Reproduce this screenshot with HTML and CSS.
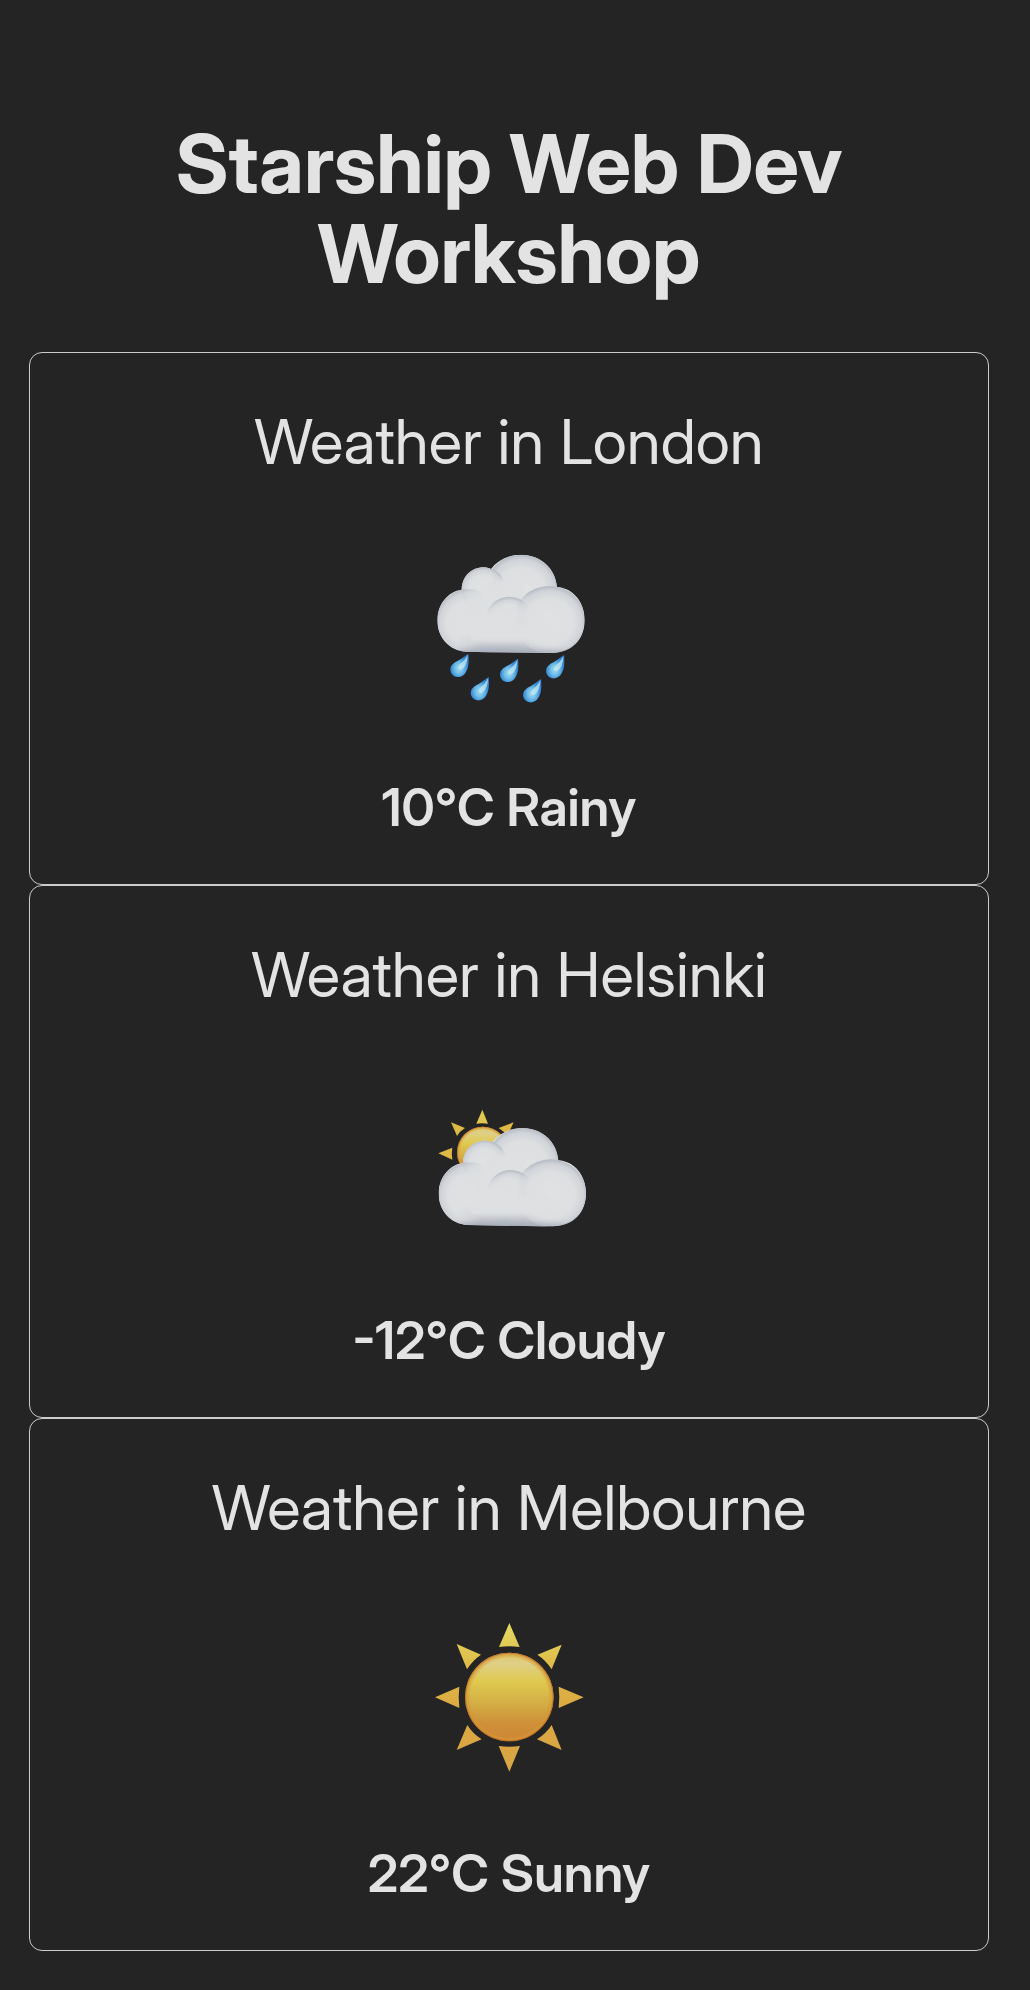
FILE: index.html
```html
<!DOCTYPE html>
<html lang="en">
<head>
<meta charset="utf-8">
<meta name="viewport" content="width=device-width, initial-scale=1">
<title>Starship Web Dev Workshop</title>
<link rel="stylesheet" href="styles.css">
</head>
<body>
<svg class="defs" aria-hidden="true">
  <defs>
    <linearGradient id="cloudBase" x1="0" y1="0" x2="0" y2="1">
      <stop offset="0" stop-color="#dcdee0"/>
      <stop offset=".78" stop-color="#dddfe1"/>
      <stop offset=".92" stop-color="#bfc4cb"/>
      <stop offset="1" stop-color="#abb1bb"/>
    </linearGradient>
    <radialGradient id="lobe" cx=".5" cy=".53" r=".53">
      <stop offset="0" stop-color="#e1e2e3"/>
      <stop offset=".65" stop-color="#dddfe1"/>
      <stop offset=".87" stop-color="#d0d3d8"/>
      <stop offset="1" stop-color="#b4bac3"/>
    </radialGradient>
    <linearGradient id="fade" x1="0" y1="0" x2="0" y2="1">
      <stop offset=".1" stop-color="#fff"/>
      <stop offset=".4" stop-color="#000"/>
    </linearGradient>
    <linearGradient id="fadeDiagonal" gradientUnits="userSpaceOnUse" x1="150" y1="100" x2="190" y2="165">
      <stop offset=".65" stop-color="#fff"/>
      <stop offset="1" stop-color="#000"/>
    </linearGradient>
    <linearGradient id="fadeRight" x1="0" y1="0" x2="1" y2="0">
      <stop offset=".3" stop-color="#fff"/>
      <stop offset=".7" stop-color="#000"/>
    </linearGradient>
    <linearGradient id="fadeLeft" x1="0" y1="0" x2="1" y2="0">
      <stop offset=".08" stop-color="#000"/>
      <stop offset=".25" stop-color="#fff"/>
    </linearGradient>
    <mask id="smallMask"><path fill="url(#fadeDiagonal)" d="M120 78h140v140H120z"/></mask>
    <mask id="middleMask"><path fill="url(#fade)" d="M196 165h144v150H196z"/></mask>
    <mask id="leftMask"><path fill="url(#fadeRight)" d="M50 140h190v202H50z"/></mask>
    <mask id="rightMask"><path fill="url(#fadeLeft)" d="M270 130h230v215H270z"/></mask>
    <filter id="soft" x="-20%" y="-50%" width="140%" height="200%"><feGaussianBlur stdDeviation="7"/></filter>
    <clipPath id="cloudClip">
      <path d="M52 240C52 194 84 153 125 149C126 108 155 82 190 82C199 82 207 84 213 87C232 61 265 44 303 44C363 44 407 86 411 141C460 144 494 187 494 240C494 298 456 339 395 339C310 340 225 336 140 335C86 333 52 291 52 240Z"/>
    </clipPath>
    <radialGradient id="drop" cx=".48" cy=".62" r=".6">
      <stop offset="0" stop-color="#a3ddec"/>
      <stop offset=".38" stop-color="#74bfe8"/>
      <stop offset=".7" stop-color="#3e94db"/>
      <stop offset="1" stop-color="#2f7dca"/>
    </radialGradient>
    <linearGradient id="sunFill" x1="0" y1="0" x2="0" y2="1">
      <stop offset="0" stop-color="#deca65"/>
      <stop offset=".12" stop-color="#dfcf88"/>
      <stop offset=".32" stop-color="#dfca50"/>
      <stop offset=".58" stop-color="#d3ad45"/>
      <stop offset=".8" stop-color="#ce9038"/>
      <stop offset="1" stop-color="#cf8535"/>
    </linearGradient>
    <radialGradient id="sunEdge">
      <stop offset=".88" stop-color="#d68a2d" stop-opacity="0"/>
      <stop offset=".96" stop-color="#d49b35" stop-opacity=".7"/>
      <stop offset="1" stop-color="#b9601f"/>
    </radialGradient>
    <linearGradient id="rayFill" gradientUnits="userSpaceOnUse" x1="0" y1="40" x2="0" y2="485">
      <stop offset="0" stop-color="#e4da65"/>
      <stop offset=".3" stop-color="#deb946"/>
      <stop offset=".6" stop-color="#dba842"/>
      <stop offset="1" stop-color="#d9a545"/>
    </linearGradient>

    <g id="cloud">
      <g clip-path="url(#cloudClip)">
        <path fill="url(#cloudBase)" d="M40 30h470v320H40z"/>
        <circle cx="304" cy="151" r="108" fill="url(#lobe)"/>
        <path fill="#dee0e1" d="M180 125h125v125H180z" filter="url(#soft)"/>
        <g mask="url(#smallMask)"><circle cx="190" cy="147" r="66" fill="url(#lobe)"/></g>
        <path fill="#dee0e1" d="M150 170h140v100H150z" filter="url(#soft)"/>
        <g mask="url(#leftMask)"><ellipse cx="145" cy="242" rx="94" ry="95" fill="url(#lobe)"/></g>
        <g mask="url(#middleMask)"><circle cx="268" cy="240" r="70" fill="url(#lobe)"/></g>
        <g mask="url(#rightMask)"><ellipse cx="388" cy="239" rx="107" ry="101" fill="url(#lobe)"/></g>
        <path fill="#dee0e1" d="M150 245h240v60H150z" filter="url(#soft)"/>
        <path fill="#a5acb7" opacity=".7" d="M100 334C190 320 320 326 440 332L430 350H110Z" filter="url(#soft)"/>
      </g>
    </g>
    <g id="raindrop">
      <path fill="url(#drop)" d="M54 0C56 18 56 40 47 55C37 76 7 75 1 54C-3 35 11 27 25 20C36 14 45 6 54 0Z"/>
      <path fill="#c5eaf1" opacity=".75" d="M52 4C46 16 38 24 29 32C20 40 25 51 34 47C47 41 52 20 52 4Z"/>
    </g>
    <g id="sun">
      <g fill="url(#rayFill)">
        <path d="M268 39L299 111Q268 107 237 111Z"/>
        <path d="M425 104L395 178Q378 151 352 134Z"/>
        <path d="M491 262L416 294Q420 262 416 230Z"/>
        <path d="M425 420L351 388Q378 371 395 345Z"/>
        <path d="M268 485L236 408Q268 413 300 408Z"/>
        <path d="M110 420L142 345Q158 371 185 388Z"/>
        <path d="M45 262L118 230Q114 262 118 294Z"/>
        <path d="M110 102L183 134Q158 151 141 178Z"/>
      </g>
      <circle cx="268" cy="261" r="133" fill="url(#sunFill)"/>
      <circle cx="268" cy="261" r="133" fill="url(#sunEdge)"/>
    </g>
  </defs>
</svg>

<main class="app">
  <h1 class="title">Starship Web Dev Workshop</h1>

  <section class="card">
    <h2 class="city">Weather in London</h2>
    <svg class="icon" viewBox="-3 0 540 540" role="img" aria-label="Rain cloud">
      <use href="#cloud"/>
      <use href="#raindrop" x="91" y="341"/>
      <use href="#raindrop" x="240" y="356"/>
      <use href="#raindrop" x="378" y="345"/>
      <use href="#raindrop" x="152" y="411"/>
      <use href="#raindrop" x="309" y="417"/>
    </svg>
    <p class="status">10°C Rainy</p>
  </section>

  <section class="card">
    <h2 class="city">Weather in Helsinki</h2>
    <svg class="icon" viewBox="-3 -51 540 540" role="img" aria-label="Sun behind cloud">
      <g fill="#deb946">
        <path fill="#dfc750" d="M187 59L204 101Q187 98 169 101Z"/>
        <path d="M93 97L135 114Q120 123 111 138Z"/>
        <path d="M55 190L97 173Q94 190 97 209Z"/>
        <path d="M281 97L262 138Q252 124 236 114Z"/>
      </g>
      <g transform="translate(33 36) scale(.58)">
        <circle cx="268" cy="261" r="133" fill="url(#sunFill)"/>
        <circle cx="268" cy="261" r="133" fill="url(#sunEdge)"/>
      </g>
      <use href="#cloud" x="4" y="70"/>
    </svg>
    <p class="status">-12°C Cloudy</p>
  </section>

  <section class="card">
    <h2 class="city">Weather in Melbourne</h2>
    <svg class="icon" viewBox="-3 -12 540 540" role="img" aria-label="Sun">
      <use href="#sun"/>
    </svg>
    <p class="status">22°C Sunny</p>
  </section>
</main>
</body>
</html>
```

FILE: styles.css
```css
body {
  margin: 0;
  background: #242424;
  color: #e3e3e3;
  font-family: "Inter Display", Inter, "Liberation Sans", sans-serif;
  text-align: center;
}

.defs {
  position: absolute;
  width: 0;
  height: 0;
}

.app {
  padding: 119px 41px 38px 29px;
}

.title {
  max-width: 760px;
  margin: 0 auto 53px;
  font-size: 81px;
  line-height: 90px;
  font-weight: 700;
}

.card {
  display: flex;
  flex-direction: column;
  align-items: center;
  padding: 53px 24px 46px;
  border: 1px solid #cccccc;
  border-radius: 13px;
}

.city {
  margin: 0 0 62px;
  font-size: 62px;
  line-height: 72px;
  font-weight: 400;
}

.icon {
  display: block;
  width: 180px;
  height: 180px;
}

.status {
  margin: 58px 0 0;
  font-size: 52px;
  line-height: 60px;
  font-weight: 600;
}
```
